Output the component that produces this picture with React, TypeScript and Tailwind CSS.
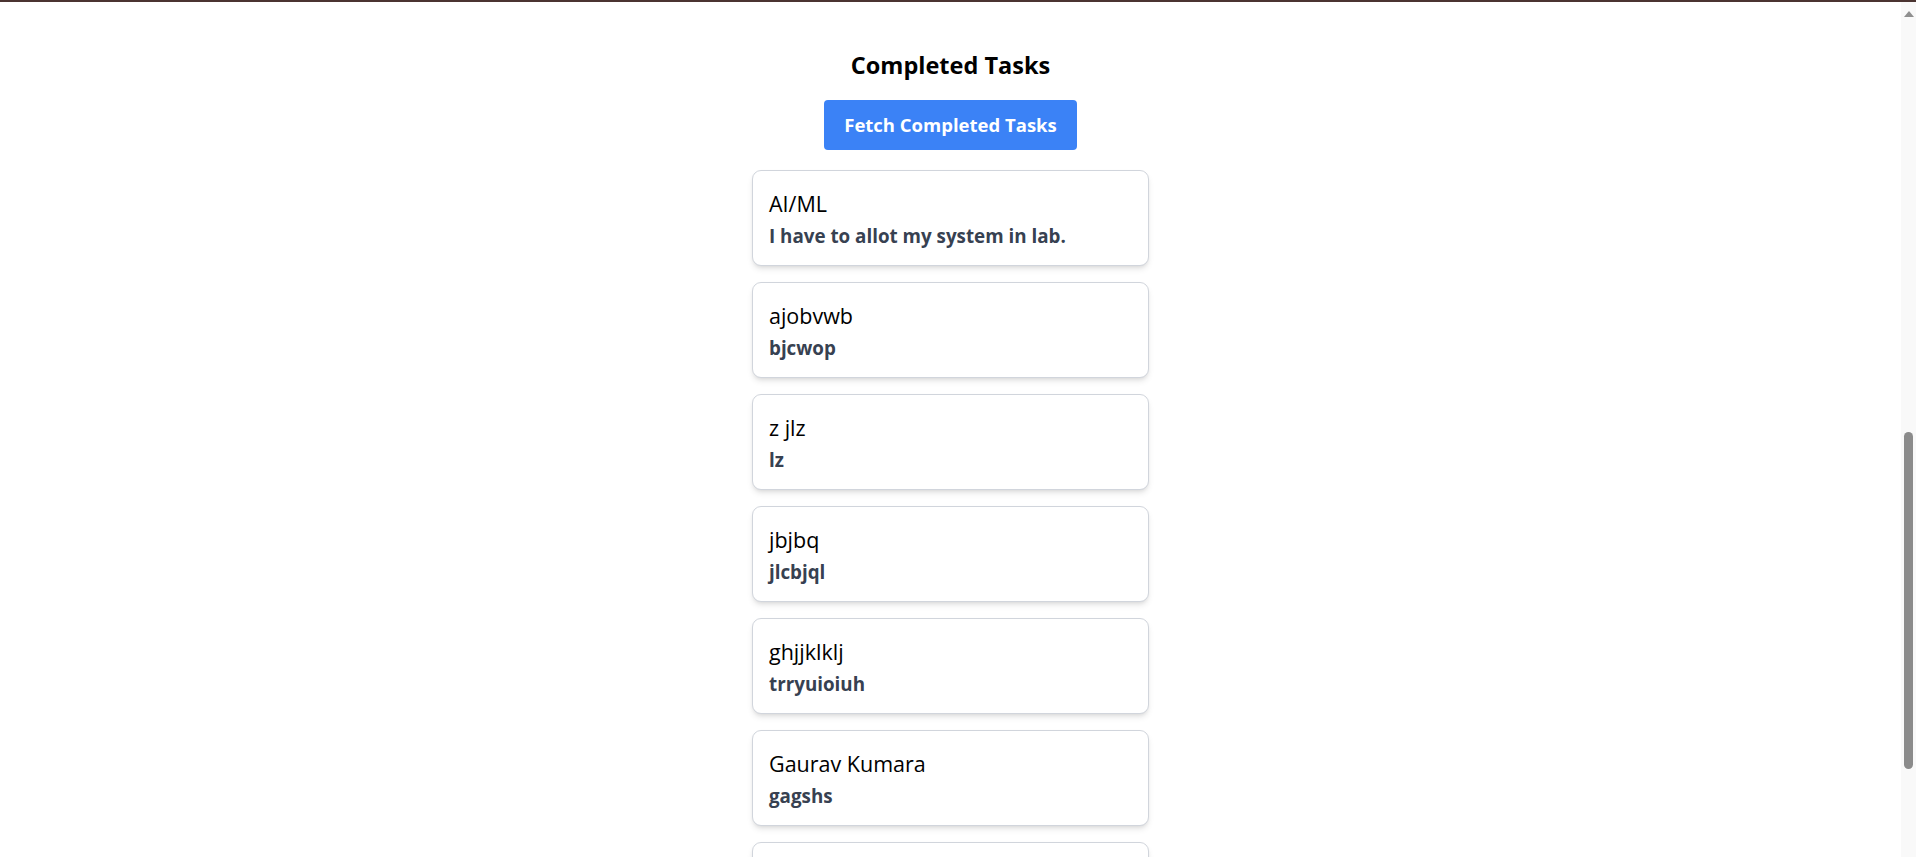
const tasks = [
  { title: "AI/ML", desc: "I have to allot my system in lab." },
  { title: "ajobvwb", desc: "bjcwop" },
  { title: "z jlz", desc: "lz" },
  { title: "jbjbq", desc: "jlcbjql" },
  { title: "ghjjklklj", desc: "trryuioiuh" },
  { title: "Gaurav Kumara", desc: "gagshs" },
  { title: "hsjsk", desc: "kskks" },
];

export default function App() {
  return (
    <div className="h-screen flex flex-col overflow-hidden bg-white font-['Open_Sans',sans-serif]">
      <div className="h-[2px] bg-[#4b3431]" />
      <div className="flex flex-1 min-h-0">
        {/* Completed tasks */}
        <main className="flex-1 flex flex-col items-center pt-[45px]">
          <h2 className="text-[23.5px] leading-[36px] font-bold text-black mb-[17px]">Completed Tasks</h2>
          <button className="bg-[#3b82f6] text-white font-bold text-[18.5px] leading-[26px] px-[20px] py-[12px] rounded-[4px] mb-[20px]">
            Fetch Completed Tasks
          </button>
          <div className="flex flex-col gap-[16px]">
            {tasks.map((t) => (
              <div key={t.title} className="w-[397px] h-[96px] bg-white border border-gray-300 rounded-[9px] shadow-md px-[16px] pt-[18px]">
                <h3 className="text-[21.5px] leading-[30px] text-black">{t.title}</h3>
                <p className="text-[18.8px] leading-[26px] font-bold text-[#374151] mt-[4px]">{t.desc}</p>
              </div>
            ))}
          </div>
        </main>

        {/* scrollbar */}
        <div className="w-[15px] bg-[#f9f9f9] flex flex-col items-center">
          <svg width="10" height="6" viewBox="0 0 10 6" className="mt-[9px]">
            <polygon points="5,0 10,6 0,6" fill="#8f8f8f" />
          </svg>
          <div className="w-[9px] h-[337px] mt-[415px] rounded-full bg-[#8b8b8b]" />
        </div>
      </div>
    </div>
  );
}
